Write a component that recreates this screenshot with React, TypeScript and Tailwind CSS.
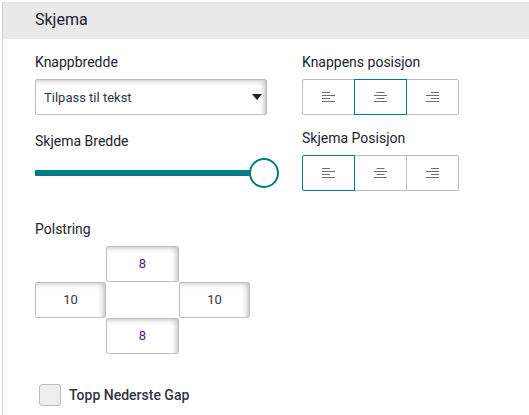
import React from "react";

const shadow = "shadow-[inset_-4px_3px_5px_-2px_rgba(0,0,0,0.24)]";

function AlignIcon({ kind }: { kind: "left" | "center" | "right" }) {
  const rows: [number, number][] =
    kind === "left"
      ? [[0, 8], [0, 13], [0, 8], [0, 13]]
      : kind === "center"
      ? [[2.5, 10.5], [0, 13], [2.5, 10.5], [0, 13]]
      : [[5, 13], [0, 13], [5, 13], [0, 13]];
  return (
    <svg width="13" height="10" viewBox="0 0 13 10" className="block">
      {rows.map(([a, b], i) => (
        <rect key={i} x={a} y={i * 3} width={b - a} height="1" fill="#6f6f6f" />
      ))}
    </svg>
  );
}

function AlignGroup({ active }: { active: number }) {
  const kinds = ["left", "center", "right"] as const;
  return (
    <div className="flex w-[157px] h-9">
      {kinds.map((k, i) => (
        <div
          key={k}
          className={
            "flex-1 flex items-center justify-center border " +
            (i === active ? "border-[#007c85] z-10 " : "border-[#bdbdbd] ") +
            (i === 0 ? "rounded-l-[2px] " : "-ml-px ") +
            (i === 2 ? "rounded-r-[2px]" : "")
          }
        >
          <AlignIcon kind={k} />
        </div>
      ))}
    </div>
  );
}

function Box({ v, className }: { v: string; className: string }) {
  return (
    <div
      className={`h-9 flex items-center justify-center bg-white border border-[#c0c0c0] rounded-[2px] text-[13px] ${shadow} ${className}`}
    >
      {v}
    </div>
  );
}

export default function App() {
  return (
    <div className="w-[529px] h-[415px] overflow-hidden bg-white pt-[2px] pl-[2px] font-['Roboto',sans-serif] text-[#22222e] text-[14px] leading-5">
      <div className="h-full border-l border-[#cfcfd6]">
        <div className="h-[37px] bg-[#e9e9e9] pl-8 flex items-center text-[16px] pb-px">Skjema</div>
        <div className="flex pl-8 pt-[13px]">
          <div className="w-[244px]">
            <div className="mb-[7px]">Knappbredde</div>
            <div className={`w-[232px] h-9 flex items-center justify-between border border-[#bdbdbd] rounded-[2px] pl-2 pr-[4px] text-[13px] text-[#33333f] ${shadow}`}>
              <span className="pt-px">Tilpass til tekst</span>
              <svg width="10" height="6" viewBox="0 0 10 6"><path d="M0 0h10L5 6z" fill="#22222e" /></svg>
            </div>
            <div className="mt-4 mb-[7px]">Skjema Bredde</div>
            <div className="relative h-[30px] flex items-center">
              <div className="w-[216px] h-[6px] bg-[#007c85]" />
              <div className="absolute left-[214px] top-0 w-[30px] h-[30px] rounded-full border-2 border-[#007c85] bg-white" />
            </div>
          </div>
          <div className="ml-[23px]">
            <div className="mb-[7px]">Knappens posisjon</div>
            <AlignGroup active={1} />
            <div className="mt-[13px] mb-[7px]">Skjema Posisjon</div>
            <AlignGroup active={0} />
          </div>
        </div>
        <div className="pl-8 mt-[28px]">
          <div className="mb-[7px]">Polstring</div>
          <div className="grid grid-cols-[71px_73px_71px] grid-rows-[36px_36px_36px] w-[215px]">
            <Box v="8" className="col-start-2 row-start-1 text-[#4b2a78]" />
            <Box v="10" className="col-start-1 row-start-2 text-[#33333f]" />
            <Box v="10" className="col-start-3 row-start-2 text-[#33333f]" />
            <Box v="8" className="col-start-2 row-start-3 text-[#4b2a78]" />
          </div>
          <div className="flex items-center mt-[30px] ml-1">
            <div className="w-[22px] h-[22px] bg-[#eeeeee] border border-[#bdbdbd] rounded-[3px]" />
            <span className="ml-2 font-medium text-[#33333f]">Topp Nederste Gap</span>
          </div>
        </div>
      </div>
    </div>
  );
}
